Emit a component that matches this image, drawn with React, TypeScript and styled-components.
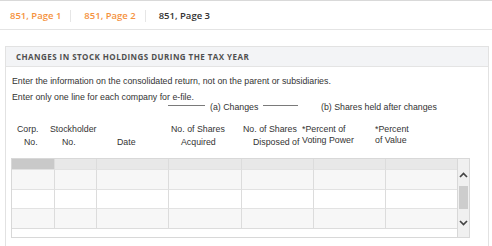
import React from "react";
import styled, { createGlobalStyle } from "styled-components";

const GlobalStyle = createGlobalStyle`
  html, body { margin: 0; padding: 0; background: #ffffff; }
  body { font-family: "Liberation Sans", Arial, sans-serif; color: #333; }
  * { box-sizing: border-box; }
`;

const TabBar = styled.nav`
  display: flex;
  align-items: center;
  height: 30px;
  padding: 1px 0 0 10px;
  border-top: 1px solid #d9d9d9;
  border-bottom: 1px solid #e4e4e4;
`;

const Tab = styled.span<{ $active?: boolean }>`
  font-family: "Open Sans", sans-serif;
  font-weight: 600;
  font-size: 9.5px;
  line-height: 14px;
  color: ${(p) => (p.$active ? "#333333" : "#f5923e")};
  padding: 0 9px 0 13px;
  &:first-child { padding-left: 0; }
`;

const TabDivider = styled.span`
  width: 1px;
  height: 12px;
  background: #e6e6e6;
`;

const Panel = styled.section`
  margin: 16px 3px 0 5px;
  border: 1px solid #e2e2e2;
  border-bottom: none;
  height: 200px;
`;

const PanelHeader = styled.h2`
  margin: 0;
  height: 20px;
  padding-left: 10px;
  display: flex;
  align-items: center;
  background: #f3f4f6;
  border-bottom: 1px solid #e4e4e4;
  font-family: "Open Sans", sans-serif;
  font-weight: 700;
  font-size: 8px;
  letter-spacing: 0.45px;
  color: #505050;
`;

const PanelBody = styled.div`
  padding: 6px 17px 0 5px;
`;

const Intro = styled.p`
  margin: 0;
  padding-left: 1px;
  font-size: 8.8px;
  line-height: 16px;
  color: #333;
`;

const LabelGrid = styled.div`
  display: grid;
  grid-template-columns: 35px 50px 72px 73px 59px 72px 1fr;
  font-size: 8.8px;
  color: #333;
`;

const GroupRow = styled(LabelGrid)`
  height: 14px;
  align-items: center;
  margin-top: -5px;
`;

const GroupLabel = styled.div<{ $col: string }>`
  grid-column: ${(p) => p.$col};
  display: flex;
  align-items: center;
  gap: 5px;
  white-space: nowrap;
`;

const GroupRule = styled.span<{ $w: number }>`
  width: ${(p) => p.$w}px;
  height: 1px;
  background: #7a7a7a;
  margin-top: -3px;
`;

const GroupText = styled.span<{ $indent?: number }>`
  margin-left: ${(p) => p.$indent ?? 0}px;
`;

const HeaderRow = styled(LabelGrid)`
  padding-top: 9px;
  height: 44px;
  align-items: start;
`;

const HeaderCell = styled.div<{ $tight?: boolean }>`
  display: flex;
  flex-direction: column;
  line-height: ${(p) => (p.$tight ? 11 : 13)}px;
  padding-top: ${(p) => (p.$tight ? 1 : 0)}px;
  white-space: nowrap;
`;

const HeaderLine = styled.span<{ $dx: number }>`
  margin-left: ${(p) => p.$dx}px;
`;

const TableFrame = styled.div`
  display: flex;
  width: 459px;
  height: 80px;
  border: 1px solid #d8d8d8;
`;

const Viewport = styled.div`
  flex: 1;
  display: flex;
  flex-direction: column;
  border-right: 1px solid #d8d8d8;
  background: #fff;
`;

const Grid = styled.div`
  display: grid;
  grid-template-columns: 43px 42px 72px 73px 72px 72px 71px;
  grid-template-rows: 10px 20px 19px 20px;
  border-bottom: 1px solid #dcdcdc;
`;

const Cell = styled.div<{ $bg: string; $last?: boolean; $head?: boolean }>`
  background: ${(p) => p.$bg};
  border-right: ${(p) => (p.$last ? "none" : "1px solid #dcdcdc")};
  border-top: ${(p) => (p.$head ? "none" : "1px solid #e2e2e2")};
`;

const ScrollBar = styled.div`
  width: 12px;
  display: flex;
  flex-direction: column;
  background: #f0f0f0;
`;

const ArrowBox = styled.div<{ $h?: number }>`
  height: ${(p) => (p.$h ? `${p.$h}px` : "auto")};
  flex: ${(p) => (p.$h ? "none" : 1)};
  display: flex;
  align-items: center;
  justify-content: center;
  padding-top: ${(p) => (p.$h ? 4 : 0)}px;
`;

const Thumb = styled.div`
  height: 23px;
  margin: 0 1px;
  background: #cdcdcd;
`;

const Chevron = ({ up }: { up?: boolean }) => (
  <svg width="9" height="6" viewBox="0 0 9 6">
    <polyline
      points={up ? "1,5 4.5,1.5 8,5" : "1,1 4.5,4.5 8,1"}
      fill="none"
      stroke="#444"
      strokeWidth="1.7"
    />
  </svg>
);

const headers: { lines: [string, number][]; tight?: boolean }[] = [
  { lines: [["Corp.", 6], ["No.", 13]] },
  { lines: [["Stockholder", 4], ["No.", 16]] },
  { lines: [["\u00a0", 0], ["Date", 21]] },
  { lines: [["No. of Shares", 3], ["Acquired", 13]] },
  { lines: [["No. of Shares", 2], ["Disposed of", 12]] },
  { lines: [["*Percent of", 2], ["Voting Power", 2]], tight: true },
  { lines: [["*Percent", 3], ["of Value", 3]], tight: true },
];

const rowColors = ["#e8e8e8", "#f7f7f7", "#ffffff", "#f7f7f7"];

export default function App() {
  return (
    <>
      <GlobalStyle />
      <TabBar>
        <Tab>851, Page 1</Tab>
        <TabDivider />
        <Tab>851, Page 2</Tab>
        <TabDivider />
        <Tab $active>851, Page 3</Tab>
      </TabBar>
      <Panel>
        <PanelHeader>CHANGES IN STOCK HOLDINGS DURING THE TAX YEAR</PanelHeader>
        <PanelBody>
          <Intro>
            Enter the information on the consolidated return, not on the parent or subsidiaries.
            <br />
            Enter only one line for each company for e-file.
          </Intro>
          <GroupRow>
            <GroupLabel $col="4 / 6">
              <GroupRule $w={37} />
              <span>(a) Changes</span>
              <GroupRule $w={35} />
            </GroupLabel>
            <GroupLabel $col="6 / 8">
              <GroupText $indent={21}>(b) Shares held after changes</GroupText>
            </GroupLabel>
          </GroupRow>
          <HeaderRow>
            {headers.map((h, i) => (
              <HeaderCell key={i} $tight={h.tight}>
                {h.lines.map(([t, dx], j) => (
                  <HeaderLine key={j} $dx={dx}>
                    {t}
                  </HeaderLine>
                ))}
              </HeaderCell>
            ))}
          </HeaderRow>
          <TableFrame>
            <Viewport>
              <Grid>
                {rowColors.map((bg, r) =>
                  Array.from({ length: 7 }).map((_, c) => (
                    <Cell
                      key={`${r}-${c}`}
                      $bg={r === 0 && c === 0 ? "#c9c9c9" : bg}
                      $last={c === 6}
                      $head={r === 0}
                    />
                  ))
                )}
              </Grid>
            </Viewport>
            <ScrollBar>
              <ArrowBox $h={27}>
                <Chevron up />
              </ArrowBox>
              <Thumb />
              <ArrowBox>
                <Chevron />
              </ArrowBox>
            </ScrollBar>
          </TableFrame>
        </PanelBody>
      </Panel>
    </>
  );
}
